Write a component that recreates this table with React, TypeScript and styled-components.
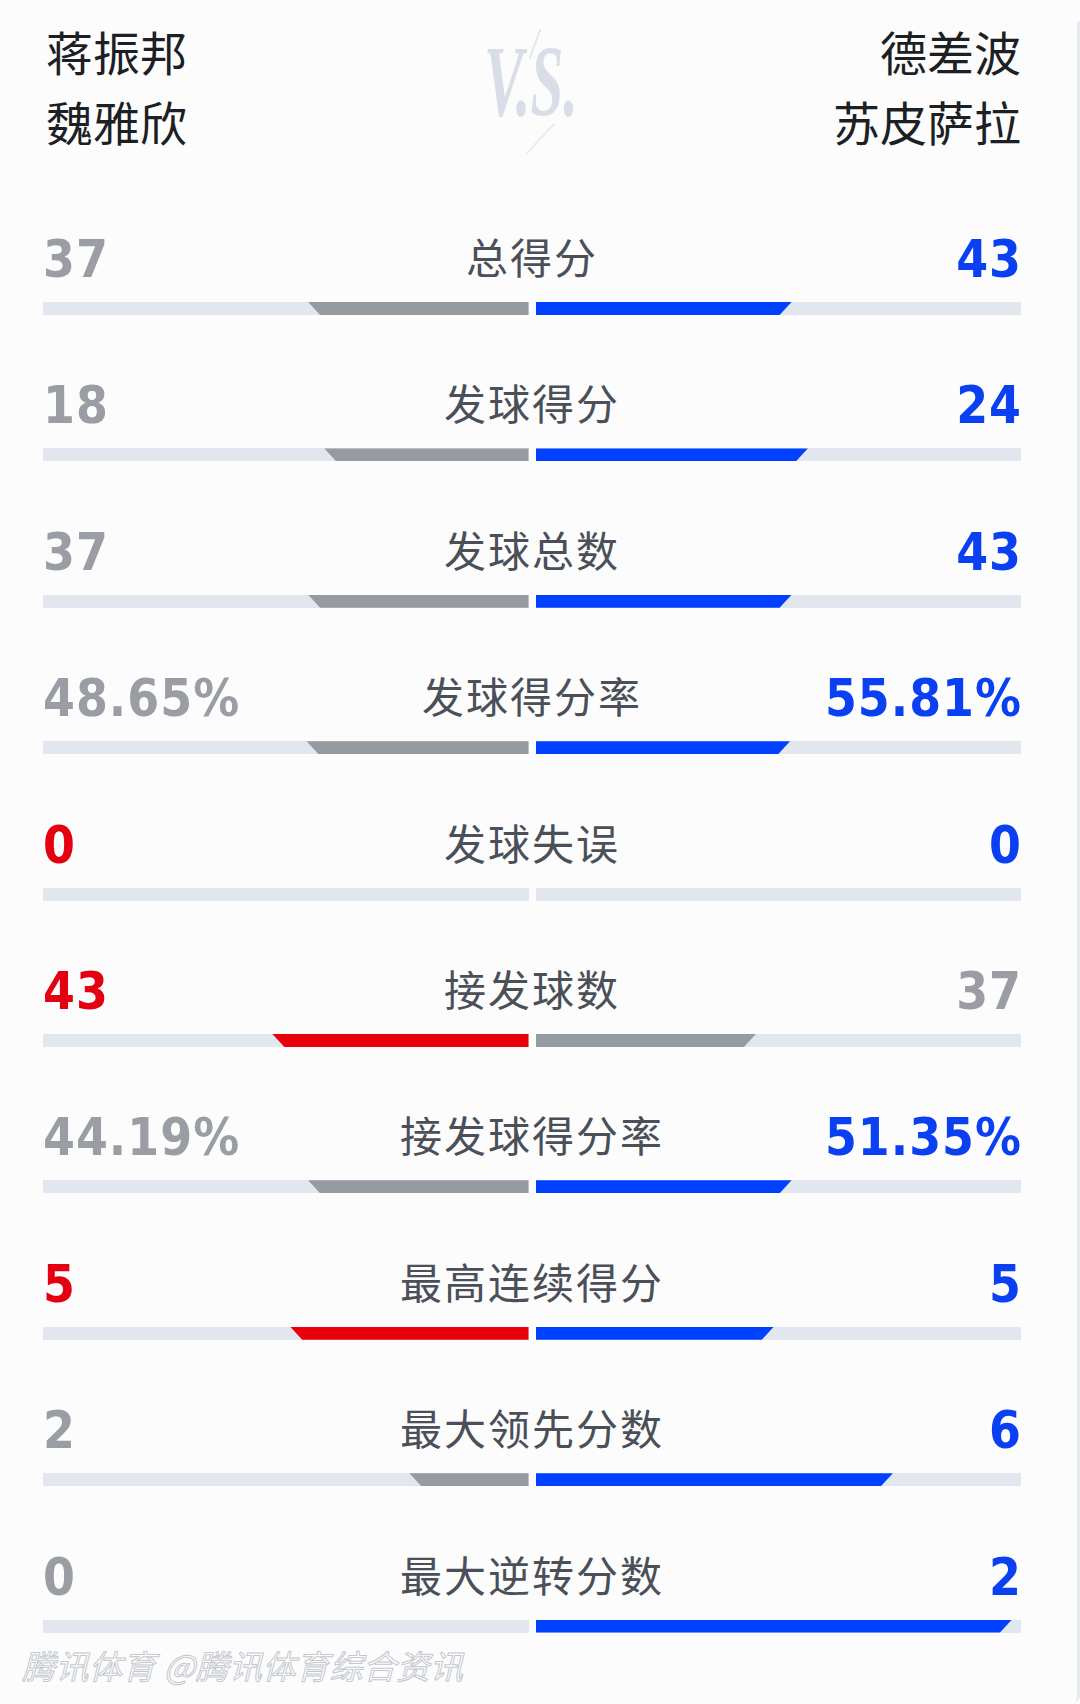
import React from 'react';
import styled, {createGlobalStyle} from 'styled-components';

const GlobalStyle = createGlobalStyle`
  html, body {
    margin: 0;
    padding: 0;
    background: #fcfcfd;
  }
`;

const CJK = `"Noto Sans CJK SC", "Noto Sans", sans-serif`;
const NUM = `"DejaVu Sans Condensed", "DejaVu Sans", sans-serif`;

const COLORS = {
  gray: '#9a9ea4',
  grayBar: '#969ba1',
  blue: '#0a3ff2',
  blueBar: '#0040ff',
  red: '#e40011',
  redBar: '#e8000b',
  track: '#e2e7ef',
};

const Page = styled.div`
  position: relative;
  width: 1080px;
  min-height: 1704px;
  box-sizing: border-box;
  padding: 16px 59px 0 43px;
  font-family: ${CJK};

  &::after {
    content: '';
    position: absolute;
    right: 0;
    top: 22px;
    bottom: 2px;
    width: 3px;
    border-right: 3px solid #e6e9ee;
    border-bottom-right-radius: 14px;
  }
`;

const Header = styled.div`
  display: grid;
  grid-template-columns: 1fr auto 1fr;
  align-items: start;
`;

const Names = styled.div<{$right?: boolean}>`
  display: flex;
  flex-direction: column;
  align-items: ${p => (p.$right ? 'flex-end' : 'flex-start')};
  padding-left: ${p => (p.$right ? 0 : 3)}px;
  font-size: 47px;
  line-height: 70px;
  color: #1c1f24;
`;

const Logo = styled.svg`
  width: 120px;
  height: 140px;
  display: block;
`;

const Stats = styled.div`
  display: flex;
  flex-direction: column;
  gap: 56.4px;
  margin-top: 69px;
`;

const Row = styled.div`
  display: flex;
  flex-direction: column;
  gap: 17px;
`;

const Line = styled.div`
  display: grid;
  grid-template-columns: 1fr auto 1fr;
  align-items: center;
  height: 60px;
`;

const Value = styled.span<{$color: string; $right?: boolean}>`
  font-family: ${NUM};
  font-stretch: condensed;
  font-weight: 700;
  font-size: 51px;
  letter-spacing: 1px;
  color: ${p => p.$color};
  text-align: ${p => (p.$right ? 'right' : 'left')};
  margin-right: ${p => (p.$right ? -1 : 0)}px;
`;

const Label = styled.span`
  font-size: 42px;
  letter-spacing: 2px;
  color: #4a4f58;
  text-align: center;
  margin-bottom: 8px;
`;

const Bars = styled.div`
  display: grid;
  grid-template-columns: 1fr 1fr;
  gap: 7px;
  height: 13px;
`;

const Track = styled.div<{$right?: boolean}>`
  background: ${COLORS.track};
  display: flex;
  justify-content: ${p => (p.$right ? 'flex-start' : 'flex-end')};
  padding: ${p => (p.$right ? '0 9px 0 0' : '0 0 0 9px')};
`;

const Fill = styled.div<{$color: string; $right?: boolean}>`
  height: 100%;
  background: ${p => p.$color};
  clip-path: ${p =>
    p.$right
      ? 'polygon(0 0, 100% 0, calc(100% - 12px) 100%, 0 100%)'
      : 'polygon(0 0, 100% 0, 100% 100%, 12px 100%)'};
`;

const Watermark = styled.div`
  margin-top: 12px;
  margin-left: -21px;
  padding-right: 8px;
  font-size: 33px;
  line-height: 40px;
  font-style: italic;
  letter-spacing: 0.5px;
  color: #ffffff;
  -webkit-text-stroke: 1px #c4c8cd;
`;

type Stat = {label: string; left: string; right: string};

const stats: Stat[] = [
  {label: '总得分', left: '37', right: '43'},
  {label: '发球得分', left: '18', right: '24'},
  {label: '发球总数', left: '37', right: '43'},
  {label: '发球得分率', left: '48.65%', right: '55.81%'},
  {label: '发球失误', left: '0', right: '0'},
  {label: '接发球数', left: '43', right: '37'},
  {label: '接发球得分率', left: '44.19%', right: '51.35%'},
  {label: '最高连续得分', left: '5', right: '5'},
  {label: '最大领先分数', left: '2', right: '6'},
  {label: '最大逆转分数', left: '0', right: '2'},
];

function StatRow({label, left, right}: Stat) {
  const l = parseFloat(left);
  const r = parseFloat(right);
  const total = l + r;
  const lp = total > 0 ? (l / total) * 100 : 0;
  const rp = total > 0 ? (r / total) * 100 : 0;
  const leftColor = l >= r ? COLORS.red : COLORS.gray;
  const rightColor = r >= l ? COLORS.blue : COLORS.gray;
  const leftBar = l >= r ? COLORS.redBar : COLORS.grayBar;
  const rightBar = r >= l ? COLORS.blueBar : COLORS.grayBar;

  return (
    <Row>
      <Line>
        <Value $color={leftColor}>{left}</Value>
        <Label>{label}</Label>
        <Value $color={rightColor} $right>
          {right}
        </Value>
      </Line>
      <Bars>
        <Track>
          <Fill $color={leftBar} style={{width: `${lp}%`}} />
        </Track>
        <Track $right>
          <Fill $color={rightBar} $right style={{width: `${rp}%`}} />
        </Track>
      </Bars>
    </Row>
  );
}

function VsLogo() {
  return (
    <Logo viewBox="0 0 120 140">
      <text
        transform="translate(12 100) scale(0.82 1.4)"
        fontFamily='"Liberation Serif", serif'
        fontStyle="italic"
        fontWeight="700"
        fontSize="72"
        fill="#d8dde7"
      >
        V.S.
      </text>
      <line x1="68" y1="14" x2="30" y2="122" stroke="#fcfcfd" strokeWidth="3" strokeLinecap="round" />
      <line x1="68" y1="14" x2="58" y2="42" stroke="#e3e6ed" strokeWidth="2" strokeLinecap="round" />
      <line x1="82" y1="108" x2="54" y2="138" stroke="#eceef3" strokeWidth="2" strokeLinecap="round" />
    </Logo>
  );
}

export default function App() {
  return (
    <>
      <GlobalStyle />
      <Page>
        <Header>
          <Names>
            <span>蒋振邦</span>
            <span>魏雅欣</span>
          </Names>
          <VsLogo />
          <Names $right>
            <span>德差波</span>
            <span>苏皮萨拉</span>
          </Names>
        </Header>
        <Stats>
          {stats.map(s => (
            <StatRow key={s.label} {...s} />
          ))}
        </Stats>
        <Watermark>腾讯体育 @腾讯体育综合资讯</Watermark>
      </Page>
    </>
  );
}
